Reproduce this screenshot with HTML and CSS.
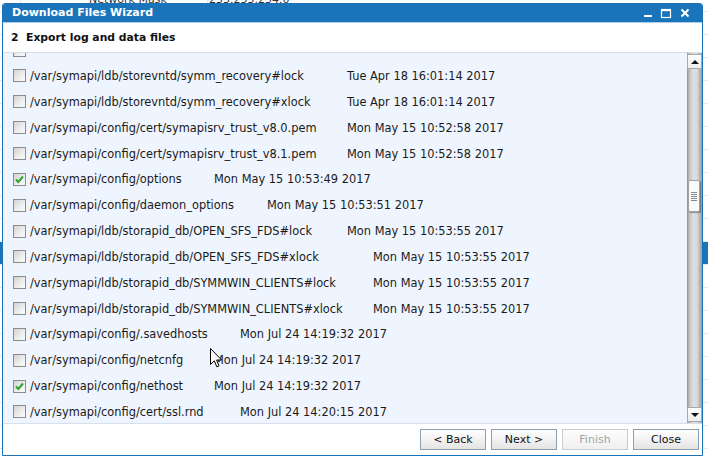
FILE: index.html
```html
<!DOCTYPE html>
<html>
<head>
<meta charset="utf-8">
<link rel="stylesheet" href="styles.css">
</head>
<body>
<div class="desk">
  <div class="bg-table">
    <div class="bg-row bg-first"><span class="bg-c1"></span><span class="bg-c2">Network Mask</span><span class="bg-c3">255.255.254.0</span></div>
    <div class="bg-row"></div>
    <div class="bg-row"></div>
    <div class="bg-row"></div>
    <div class="bg-row"></div>
    <div class="bg-row"></div>
    <div class="bg-row"></div>
    <div class="bg-row"></div>
    <div class="bg-row"></div>
    <div class="bg-row"></div>
    <div class="bg-row"></div>
    <div class="bg-row bg-sel"></div>
    <div class="bg-row"></div>
    <div class="bg-row"></div>
    <div class="bg-row"></div>
    <div class="bg-row"></div>
    <div class="bg-row"></div>
    <div class="bg-row"></div>
    <div class="bg-row"></div>
    <div class="bg-row"></div>
    <div class="bg-row"></div>
  </div>

  <div class="dialog">
    <div class="titlebar">
      <span class="title">Download Files Wizard</span>
      <div class="ctrls">
        <svg class="ctl" width="10" height="12" viewBox="0 0 10 12"><rect x="1" y="8" width="8" height="2" fill="#fff"/></svg>
        <svg class="ctl" width="12" height="12" viewBox="0 0 12 12"><rect x="1.5" y="2.5" width="9" height="8" fill="none" stroke="#fff" stroke-width="1.2"/><rect x="1" y="2" width="10" height="2.2" fill="#fff"/></svg>
        <svg class="ctl" width="12" height="12" viewBox="0 0 12 12"><path d="M2.5 2.5 L9.5 9.5 M9.5 2.5 L2.5 9.5" stroke="#fff" stroke-width="2" fill="none"/></svg>
      </div>
    </div>
    <div class="step">2&nbsp; Export log and data files</div>
    <div class="listwrap">
      <div class="list">
        <div class="row row-first"><span class="cb"></span></div>
        <div class="row"><span class="cb"></span><span class="path tab13">/var/symapi/ldb/storevntd/symm_recovery#lock</span><span class="date">Tue Apr 18 16:01:14 2017</span></div>
        <div class="row"><span class="cb"></span><span class="path tab13">/var/symapi/ldb/storevntd/symm_recovery#xlock</span><span class="date">Tue Apr 18 16:01:14 2017</span></div>
        <div class="row"><span class="cb"></span><span class="path tab13">/var/symapi/config/cert/symapisrv_trust_v8.0.pem</span><span class="date">Mon May 15 10:52:58 2017</span></div>
        <div class="row"><span class="cb"></span><span class="path tab13">/var/symapi/config/cert/symapisrv_trust_v8.1.pem</span><span class="date">Mon May 15 10:52:58 2017</span></div>
        <div class="row"><span class="cb checked"><svg width="11" height="11" viewBox="0 0 11 11"><path d="M2 5.5 L4.3 8 L9 2.5" stroke="#2ba52b" stroke-width="2" fill="none"/></svg></span><span class="path tab8">/var/symapi/config/options</span><span class="date">Mon May 15 10:53:49 2017</span></div>
        <div class="row"><span class="cb"></span><span class="path tab10">/var/symapi/config/daemon_options</span><span class="date">Mon May 15 10:53:51 2017</span></div>
        <div class="row"><span class="cb"></span><span class="path tab13">/var/symapi/ldb/storapid_db/OPEN_SFS_FDS#lock</span><span class="date">Mon May 15 10:53:55 2017</span></div>
        <div class="row"><span class="cb"></span><span class="path tab14">/var/symapi/ldb/storapid_db/OPEN_SFS_FDS#xlock</span><span class="date">Mon May 15 10:53:55 2017</span></div>
        <div class="row"><span class="cb"></span><span class="path tab14">/var/symapi/ldb/storapid_db/SYMMWIN_CLIENTS#lock</span><span class="date">Mon May 15 10:53:55 2017</span></div>
        <div class="row"><span class="cb"></span><span class="path tab14">/var/symapi/ldb/storapid_db/SYMMWIN_CLIENTS#xlock</span><span class="date">Mon May 15 10:53:55 2017</span></div>
        <div class="row"><span class="cb"></span><span class="path tab9">/var/symapi/config/.savedhosts</span><span class="date">Mon Jul 24 14:19:32 2017</span></div>
        <div class="row"><span class="cb"></span><span class="path tab8">/var/symapi/config/netcnfg</span><span class="date">Mon Jul 24 14:19:32 2017</span></div>
        <div class="row"><span class="cb checked"><svg width="11" height="11" viewBox="0 0 11 11"><path d="M2 5.5 L4.3 8 L9 2.5" stroke="#2ba52b" stroke-width="2" fill="none"/></svg></span><span class="path tab8">/var/symapi/config/nethost</span><span class="date">Mon Jul 24 14:19:32 2017</span></div>
        <div class="row"><span class="cb"></span><span class="path tab9">/var/symapi/config/cert/ssl.rnd</span><span class="date">Mon Jul 24 14:20:15 2017</span></div>
      </div>
      <div class="scrollbar">
        <div class="sb-btn"><span class="tri-up"></span></div>
        <div class="sb-thumb"><span class="grip"></span><span class="grip"></span><span class="grip"></span><span class="grip"></span><span class="grip"></span></div>
        <div class="sb-space"></div>
        <div class="sb-btn"><span class="tri-down"></span></div>
      </div>
    </div>
    <div class="footer">
      <button class="btn">&lt; Back</button>
      <button class="btn">Next &gt;</button>
      <button class="btn" disabled>Finish</button>
      <button class="btn">Close</button>
    </div>
  </div>

  <svg class="cursor" width="13" height="21" viewBox="0 0 13 21"><path d="M0.5 0.5 L0.5 16.5 L4.3 12.8 L6.8 18.8 L9 17.9 L6.6 12 L11.6 12 Z" fill="#fff" stroke="#000" stroke-width="1" stroke-linejoin="miter"/></svg>
</div>
</body>
</html>
```

FILE: styles.css
```css
html, body {
  margin: 0;
  padding: 0;
  background: #fff;
}

.desk {
  position: relative;
  width: 708px;
  height: 457px;
  overflow: hidden;
  background: #fff;
  font-family: "DejaVu Sans", Verdana, sans-serif;
}

/* background application */
.bg-table {
  display: flex;
  flex-direction: column;
  margin-top: -11px;
}

.bg-row {
  height: 22px;
  border-bottom: 1px solid #e6e6e6;
  display: flex;
  font-size: 11px;
  line-height: 22px;
  color: #333;
}

.bg-sel {
  background: #1a74ba;
}

.bg-c1 {
  width: 20px;
  border-right: 1px solid #e6e6e6;
}

.bg-c2 {
  width: 118px;
  padding-left: 68px;
  border-right: 1px solid #e6e6e6;
}

.bg-c3 {
  padding-left: 1px;
}

/* dialog */
.dialog {
  position: absolute;
  left: 2px;
  top: 3px;
  width: 701px;
  height: 453px;
  box-sizing: border-box;
  border: 1px solid #1a72b8;
  border-radius: 3px 3px 0 0;
  background: #fff;
  display: flex;
  flex-direction: column;
}

.titlebar {
  height: 18px;
  background: #1a74ba;
  border-bottom: 1px solid #a9cdea;
  display: flex;
  align-items: center;
  justify-content: space-between;
  padding-left: 9px;
  padding-right: 11px;
  border-radius: 2px 2px 0 0;
}

.title {
  color: #fff;
  font-weight: bold;
  font-size: 11px;
  line-height: 18px;
}

.ctrls {
  display: flex;
  align-items: center;
  gap: 7px;
  height: 18px;
}

.ctl {
  display: block;
}

.step {
  height: 29px;
  border-bottom: 1px solid #d6e0ea;
  font-weight: bold;
  font-size: 10.8px;
  line-height: 29px;
  padding-left: 8px;
  color: #111;
}

.listwrap {
  height: 370px;
  display: flex;
  background: #eef5fe;
  border-bottom: 1px solid #d6e0ea;
}

.list {
  flex: 1;
  overflow: hidden;
  display: flex;
  flex-direction: column;
}

.row {
  flex: none;
  height: 25.85px;
  display: flex;
  align-items: center;
  padding-left: 10px;
  font-size: 11.4px;
  color: #1a1a1a;
  white-space: nowrap;
}

.row-first {
  margin-top: -15.8px;
}

.cb {
  flex: none;
  width: 13px;
  height: 13px;
  box-sizing: border-box;
  border: 1px solid #8c8c8c;
  background: linear-gradient(135deg, #d2d2d2 0%, #ececec 55%, #fcfcfc 100%);
  margin-right: 4px;
  display: flex;
  align-items: center;
  justify-content: center;
}

.cb svg {
  display: block;
}

.path {
  display: inline-block;
  flex: none;
}

.tab8 { width: 184px; }
.tab9 { width: 210px; }
.tab10 { width: 237px; }
.tab13 { width: 317px; }
.tab14 { width: 343px; }

/* scrollbar */
.scrollbar {
  width: 15px;
  flex: none;
  box-sizing: border-box;
  padding: 1px 0;
  display: flex;
  flex-direction: column;
  background: linear-gradient(to right, #8e8e8e 0, #bdbdbd 2px, #dedede 6px, #dadada 10px, #b4b4b4 13px, #9a9a9a 15px);
}

.sb-btn {
  height: 15px;
  flex: none;
  box-sizing: border-box;
  border: 1px solid #a9a9a9;
  background: linear-gradient(#ffffff, #ececec);
  display: flex;
  align-items: center;
  justify-content: center;
}

.tri-up {
  width: 0;
  height: 0;
  border-left: 4px solid transparent;
  border-right: 4px solid transparent;
  border-bottom: 4px solid #111;
}

.tri-down {
  width: 0;
  height: 0;
  border-left: 4px solid transparent;
  border-right: 4px solid transparent;
  border-top: 4px solid #111;
}

.sb-thumb {
  flex: none;
  margin-top: 111px;
  margin-left: 1px;
  width: 12px;
  height: 32px;
  box-sizing: border-box;
  border: 1px solid #a2a2a2;
  border-radius: 2px;
  background: #fbfbfb;
  box-shadow: 1px 1px 1px rgba(0, 0, 0, 0.35);
  display: flex;
  flex-direction: column;
  align-items: center;
  justify-content: center;
  gap: 1px;
}

.grip {
  width: 6px;
  height: 1px;
  background: #8a8a8a;
}

.sb-space {
  flex: 1;
}

/* footer */
.footer {
  height: 31px;
  display: flex;
  justify-content: flex-end;
  align-items: flex-start;
  gap: 5px;
  padding-top: 5px;
  padding-right: 3px;
  box-sizing: border-box;
}

.btn {
  width: 66px;
  height: 21px;
  box-sizing: border-box;
  border: 1px solid #8e9fb2;
  background: linear-gradient(#ffffff 0%, #f2f2f2 50%, #e4e4e4 100%);
  font-family: "DejaVu Sans", Verdana, sans-serif;
  font-size: 11px;
  color: #111;
  padding: 0;
  margin: 0;
}

.btn:disabled {
  border-color: #c3cbd4;
  color: #a4a4a4;
  background: linear-gradient(#fdfdfd, #f0f0f0);
}

.cursor {
  position: absolute;
  left: 210px;
  top: 348px;
}
```
